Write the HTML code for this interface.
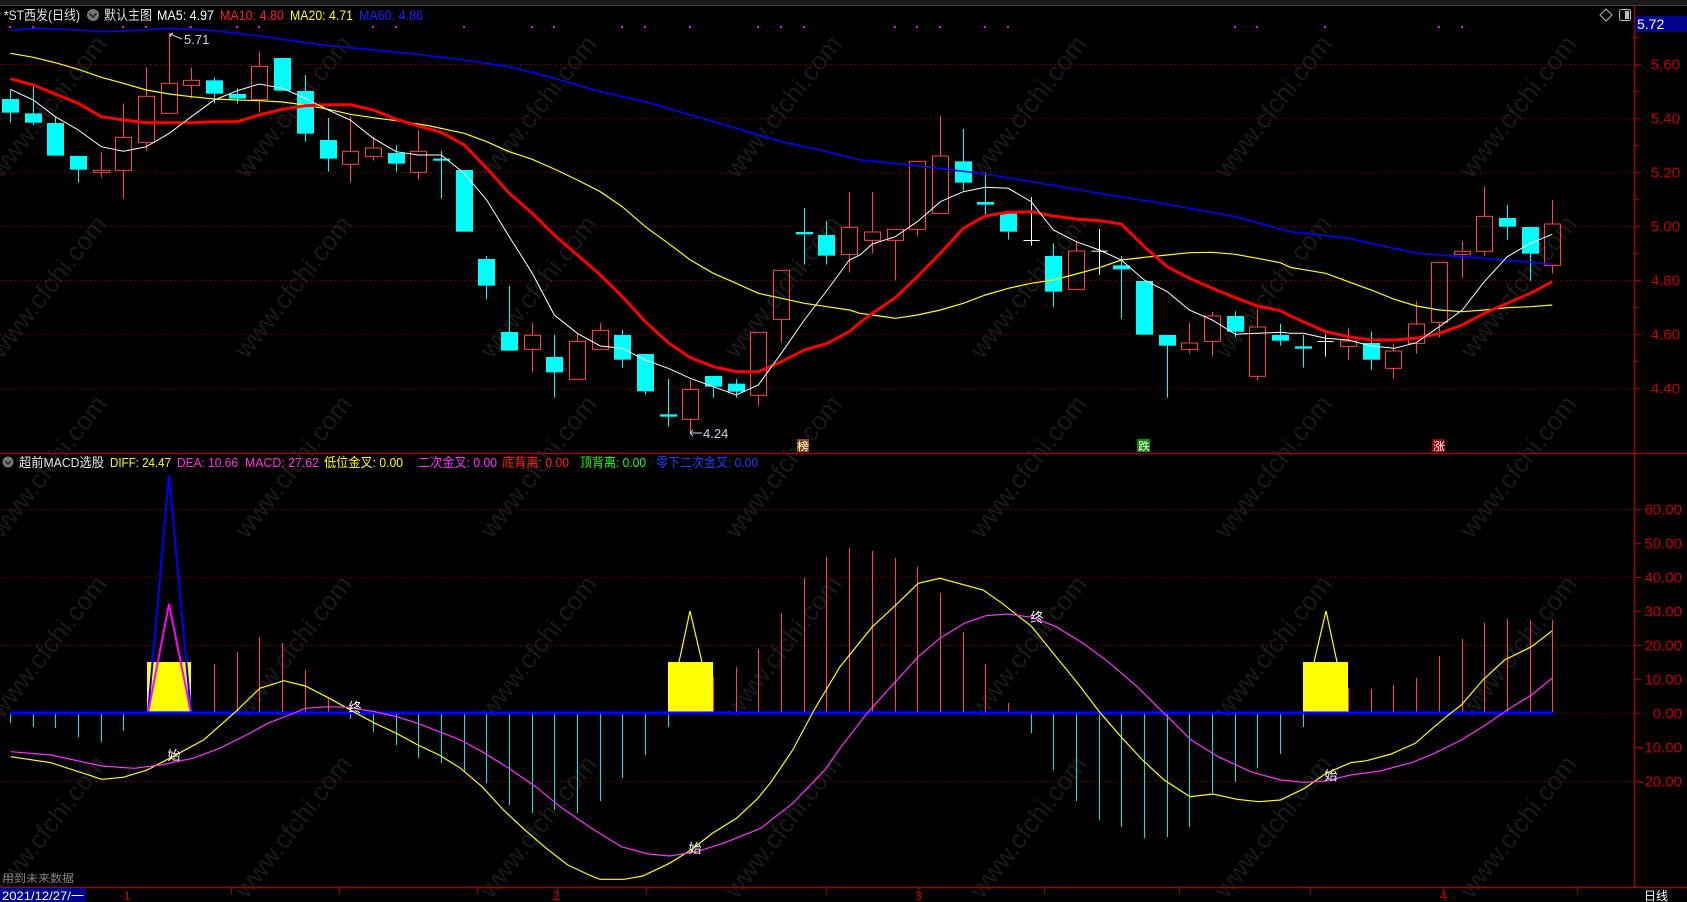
<!DOCTYPE html>
<html><head><meta charset="utf-8">
<style>
html,body{margin:0;padding:0;background:#000;overflow:hidden}
svg{display:block}
text{font-family:"Liberation Sans","Noto Sans CJK SC",sans-serif}
</style></head>
<body>
<svg id="s" xmlns="http://www.w3.org/2000/svg" width="1687" height="902" viewBox="0 0 1687 902">
<rect width="1687" height="902" fill="#000"/>
<rect x="0" y="0" width="1687" height="5" fill="#1a1a1a"/>
<line x1="0" y1="5.5" x2="1687" y2="5.5" stroke="#444" stroke-width="1"/>
<g id="wm"></g>
<g id="grid"></g>
<g id="cand"></g>
<g id="lines"></g>
<g id="macd"></g>
<line x1="1634.5" y1="6" x2="1634.5" y2="887" stroke="#a00000" stroke-width="1.5"/>
<line x1="0" y1="453.5" x2="1687" y2="453.5" stroke="#a00000" stroke-width="1.5"/>
<line x1="0" y1="887.5" x2="1687" y2="887.5" stroke="#a00000" stroke-width="1.5"/>
<g id="ticks"></g>
<g lengthAdjust="spacingAndGlyphs">
<text x="4" y="20" font-size="13.5" fill="#e0e0e0" textLength="76" lengthAdjust="spacingAndGlyphs">*ST西发(日线)</text>
<text x="104" y="20" font-size="13.5" fill="#e0e0e0" textLength="48" lengthAdjust="spacingAndGlyphs">默认主图</text>
<text x="157" y="20" font-size="13.5" fill="#ffffff" textLength="57" lengthAdjust="spacingAndGlyphs">MA5: 4.97</text>
<text x="220" y="20" font-size="13.5" fill="#ff2020" textLength="64" lengthAdjust="spacingAndGlyphs">MA10: 4.80</text>
<text x="290" y="20" font-size="13.5" fill="#ffff00" textLength="63" lengthAdjust="spacingAndGlyphs">MA20: 4.71</text>
<text x="359" y="20" font-size="13.5" fill="#2020ff" textLength="64" lengthAdjust="spacingAndGlyphs">MA60: 4.86</text>
</g>
<circle cx="93" cy="15" r="6" fill="#777"/>
<path d="M89.5 13.5 L93 17 L96.5 13.5" stroke="#222" stroke-width="1.6" fill="none"/>
<path d="M1606 9 L1612 15 L1606 21 L1600 15 Z" stroke="#bbb" stroke-width="1" fill="none"/>
<rect x="1619.5" y="9.5" width="11" height="11" rx="2" stroke="#bbb" fill="none"/>
<rect x="1625" y="11" width="4" height="8" fill="#bbb"/>
<rect x="1635" y="16" width="52" height="16" fill="#00008a"/>
<text x="1637" y="29" font-size="14" fill="#fff">5.72</text>
<path d="M170 34 L182 39 M170 34 L173 33 M170 34 L171 37" stroke="#c8d4e4" stroke-width="1" fill="none"/>
<text x="184" y="44" font-size="13" fill="#c8d4e4">5.71</text>
<path d="M690 433 L702 433 M690 433 L693 430 M690 433 L693 436" stroke="#c8d4e4" stroke-width="1" fill="none"/>
<text x="703" y="438" font-size="13" fill="#c8d4e4">4.24</text>
<rect x="797" y="439" width="12" height="13" fill="#8a4a0a"/><text x="797" y="450" font-size="11" fill="#fff" textLength="12" lengthAdjust="spacingAndGlyphs">榜</text>
<rect x="1137" y="439" width="13" height="13" fill="#0a8a0a"/><text x="1138" y="450" font-size="11" fill="#fff" textLength="12" lengthAdjust="spacingAndGlyphs">跌</text>
<rect x="1432" y="439" width="13" height="13" fill="#8a0000"/><text x="1433" y="450" font-size="11" fill="#fff" textLength="12" lengthAdjust="spacingAndGlyphs">涨</text>
<circle cx="8" cy="462" r="5.5" fill="#777"/>
<path d="M5 461 L8 464 L11 461" stroke="#222" stroke-width="1.4" fill="none"/>
<text x="19" y="467" font-size="13" fill="#e8e8e8" textLength="85" lengthAdjust="spacingAndGlyphs">超前MACD选股</text>
<text x="110" y="467" font-size="13" fill="#ffff00" textLength="61" lengthAdjust="spacingAndGlyphs">DIFF: 24.47</text>
<text x="177" y="467" font-size="13" fill="#ff33dd" textLength="61" lengthAdjust="spacingAndGlyphs">DEA: 10.66</text>
<text x="245" y="467" font-size="13" fill="#ff33dd" textLength="74" lengthAdjust="spacingAndGlyphs">MACD: 27.62</text>
<text x="324" y="467" font-size="13" fill="#ffff00" textLength="79" lengthAdjust="spacingAndGlyphs">低位金叉: 0.00</text>
<text x="418" y="467" font-size="13" fill="#ff33ff" textLength="79" lengthAdjust="spacingAndGlyphs">二次金叉: 0.00</text>
<text x="502" y="467" font-size="13" fill="#ff2020" textLength="67" lengthAdjust="spacingAndGlyphs">底背离: 0.00</text>
<text x="580" y="467" font-size="13" fill="#20ff20" textLength="66" lengthAdjust="spacingAndGlyphs">顶背离: 0.00</text>
<text x="656" y="467" font-size="13" fill="#2040ff" textLength="102" lengthAdjust="spacingAndGlyphs">零下二次金叉: 0.00</text>
<text x="2" y="882" font-size="11" fill="#888" textLength="72" lengthAdjust="spacingAndGlyphs">用到未来数据</text>
<rect x="0" y="888" width="86" height="14" fill="#00008a"/>
<text x="2" y="900" font-size="12" fill="#fff" textLength="82" lengthAdjust="spacingAndGlyphs">2021/12/27/一</text>
<text x="124" y="900" font-size="12" fill="#e00000">1</text>
<text x="553" y="900" font-size="12" fill="#e00000">2</text>
<text x="915" y="900" font-size="12" fill="#e00000">3</text>
<text x="1440" y="900" font-size="12" fill="#e00000">4</text>
<text x="1644" y="900" font-size="12" fill="#fff">日线</text>
<g id="dticks"></g>
</svg>
<script>
(function(){
var NS="http://www.w3.org/2000/svg";
function el(g,t,a){var e=document.createElementNS(NS,t);for(var k in a)e.setAttribute(k,a[k]);document.getElementById(g).appendChild(e);return e;}
for(var r=0;r<5;r++)for(var c=0;c<7;c++){
 var cx=55+245*c, cy=112+180*r;
 var t=el("wm","text",{x:cx,y:cy,"font-size":"26","fill":"#1a1a1a","text-anchor":"middle",transform:"rotate(-52 "+cx+" "+cy+")"});
 t.textContent="www.cfchi.com";
}
function py(p){return 64.3+(5.6-p)*270;}
[5.6,5.4,5.2,5.0,4.8,4.6,4.4].forEach(function(p){
 var y=Math.round(py(p))+0.5;
 el("grid","line",{x1:0,y1:y,x2:1634,y2:y,stroke:"#8a0000","stroke-dasharray":"1.5 3.5","stroke-width":1});
 var t=el("ticks","text",{x:1680,y:y+5,"font-size":"15","fill":"#c00000","text-anchor":"end"});t.textContent=p.toFixed(2);
 el("ticks","line",{x1:1634,y1:y,x2:1641,y2:y,stroke:"#a00000"});
 var y2=y+27;if(p>4.4)el("ticks","line",{x1:1634,y1:y2,x2:1639,y2:y2,stroke:"#a00000"});
});
el("ticks","line",{x1:1634,y1:37.5,x2:1639,y2:37.5,stroke:"#a00000"});
function my(v){return 713-v*3.395;}
[60,40,20,0,-20].forEach(function(v){var y=Math.round(my(v))+0.5;
 el("grid","line",{x1:0,y1:y,x2:1634,y2:y,stroke:"#8a0000","stroke-dasharray":"1.5 3.5","stroke-width":1});});
[60,50,40,30,20,10,0,-10,-20].forEach(function(v){var y=Math.round(my(v))+0.5;
 var t=el("ticks","text",{x:1682,y:y+5,"font-size":"15","fill":"#c00000","text-anchor":"end"});t.textContent=v.toFixed(2);
 el("ticks","line",{x1:1634,y1:y,x2:1641,y2:y,stroke:"#a00000"});});
[215,315,443,517,600,767,853,970,1095,1217,1341,1465].forEach(function(z){var x=Math.round(z/0.929)+0.5;
 el("dticks","line",{x1:x,y1:888,x2:x,y2:894,stroke:"#a00000"});});
var D=[["d",237,278,210,308],["d",280,308,200,316],["d",309,407,290,407],["d",408,449,408,488],["u",451,457,397,472],["u",352,451,250,536],["u",229,367,142,392],["u",190,280,40,280],["u",181,196,142,236],["d",181,221,172,250],["d",222,236,205,250],["u",139,239,94,278],["d",114,212,114,212],["d",213,341,165,365],["d",360,416,294,455],["u",394,433,289,488],["u",384,409,350,422],["d",399,431,376,455],["u",394,457,330,478],["d",416,421,393,536],["d",450,635,450,635],["d",717,797,708,838],["d",936,992,798,992],["u",946,988,909,1057],["d",1011,1057,945,1133],["u",964,1078,940,1078],["u",931,988,909,988],["d",945,1019,930,1043],["d",1002,1114,1002,1124],["d",1183,1190,1077,1220],["u",1108,1198,1080,1240],["d",1068,1100,1068,1133],["d",1091,1115,1077,1133],["u",937,1126,937,1157],["u",751,898,751,968],["d",636,643,564,734],["d",645,707,603,734],["u",622,703,516,758],["u",636,661,516,700],["u",628,661,628,782],["u",424,628,424,650],["u",408,580,288,580],["d",424,488,327,512],["d",546,554,457,585],["d",580,635,580,659],["w",660,662,531,677],["d",708,815,670,862],["u",693,808,663,808],["w",692,694,627,764],["d",736,748,708,896],["d",783,944,783,944],["d",945,977,945,1133],["u",969,988,909,1000],["u",888,964,875,1010],["d",888,935,874,952],["u",921,1069,867,1081],["d",945,962,911,977],["d",979,986,945,1043],["w",963,966,945,1010],["u",963,979,923,1019],["d",969,1019,935,1049],["u",993,1045,970,1076],["u",912,970,843,1001],["u",727,907,727,952],["u",694,703,663,773],["u",589,694,500,707],["d",594,620,555,659],["d",621,701,621,782],["u",612,736,540,760]];
function Y(z){return 20+z/3;}
D.forEach(function(c,i){
 var x=Math.round(10+22.68*i)+0.5, t=c[0], bt=Y(c[1]), bb=Y(c[2]), h=Y(c[3]), l=Y(c[4]);
 var col=t=="u"?"#ff4444":(t=="w"?"#ffffff":"#00ffff");
 if(t=="u"){
  if(h<bt)el("cand","line",{x1:x,y1:h,x2:x,y2:bt,stroke:col});
  if(l>bb)el("cand","line",{x1:x,y1:bb,x2:x,y2:l,stroke:col});
  el("cand","rect",{x:x-8,y:bt,width:16,height:Math.max(1,bb-bt),fill:"none",stroke:col,"stroke-width":1});
 }else{
  el("cand","line",{x1:x,y1:h,x2:x,y2:l,stroke:col});
  var hh=Math.max(2,bb-bt);
  if(t=="w")el("cand","rect",{x:x-8,y:bt,width:16,height:1,fill:col});
  else el("cand","rect",{x:x-8.5,y:bt,width:17,height:hh,fill:col});
 }
});
[10,33,123,146,191,237,259,373,396,464,532,554,622,645,690,758,781,804,895,917,940,985,1008,1235,1257,1325,1439,1462].forEach(function(x){
 el("cand","rect",{x:x-1,y:26,width:2,height:2,fill:"#ff00ff"});});
function seg(list){var out=[];list.forEach(function(s){var ox=s[0];for(var k=1;k<s.length;k+=2)out.push((ox+s[k]/3).toFixed(1)+","+Y(s[k+1]).toFixed(1));});return out.join(" ");}
var MA60=[[0,31,32,100,25,235,30,304,35,439,30,508,25,574,28,643,32,712,40,778,48,847,58,916,68,985,77,1051,83,1120,90,1189,97,1255,103],[430,0,108,103,120,238,140,373,175,511,215,646,245,781,285,919,325,1054,365,1192,395],[860,0,420,172,437,376,462,514,485,718,520,922,553,1126,590],[1290,0,635,175,655,379,700,583,715,787,733]];
var MA20=[[0,31,100,100,112,166,128,235,148,304,172,370,190,439,210,508,222,574,230,643,237,712,240,778,242,847,246,916,255,985,268,1051,283,1120,293,1189,302,1255,312],[430,0,318,103,340,170,365,238,395,307,418,373,447,442,480,511,515,577,560,646,620,715,670,781,720,850,760,919,790,985,820,1054,835,1123,850,1192,860,1258,870],[860,0,880,37,885,106,895,172,885,241,870,310,850,376,825,445,805,514,790,580,780,649,762,718,743,784,720,853,712,922,705,988,698,1057,697,1126,703,1192,715,1261,728],[1290,0,742,107,760,175,785,244,810,313,838,379,858,448,870,517,875,583,870,652,863,721,860,787,855]];
var MA10=[[0,31,176,100,195,166,222,235,250,304,290,370,300,439,308,508,308,574,308,643,305,712,305,778,285,847,268,916,257,985,254,1051,254,1120,270,1189,298,1255,318],[430,0,328,34,337,103,375,170,445,238,520,307,580,373,645,442,705,511,765,577,830,646,905,715,968,781,1013,850,1040,919,1055,985,1055,1054,1025,1123,990,1192,970,1258,935],[860,0,908,37,880,106,833,172,770,241,700,310,625,376,588,445,577,514,575,580,588,649,597,718,602,784,612,853,680,922,740,988,775,1057,805,1126,833,1192,858,1261,872],[1290,0,887,107,935,175,950,244,960,313,960,379,955,448,940,517,915,583,880,652,850,721,820,787,785]];
var MA5=[[0,31,208,100,240,166,290,235,330,304,380,370,394,439,380,508,340,574,290,643,240,712,212,778,192,847,205,916,235,985,270,1051,300,1120,355,1189,395,1255,405],[430,0,405,34,405,103,460,170,540,238,650,307,760,373,885,442,940,511,978,577,985,646,1020,715,1045,781,1075,850,1100,919,1125,985,1095,1054,1000,1123,900,1192,810,1258,720],[860,0,705,37,672,106,650,172,605,241,545,310,515,376,502,445,505,514,545,580,630,649,665,718,690,784,720,853,780,922,815,988,870,1057,900,1126,943,1192,940,1261,937],[1290,0,940,40,940,107,955,175,960,244,978,313,985,379,968,448,920,517,870,583,785,652,710,721,670,787,643]];
el("lines","polyline",{points:seg(MA60),fill:"none",stroke:"#0000ff","stroke-width":1.6});
el("lines","polyline",{points:seg(MA20),fill:"none",stroke:"#ffff00","stroke-width":1.2});
el("lines","polyline",{points:seg(MA10),fill:"none",stroke:"#ff0000","stroke-width":3});
el("lines","polyline",{points:seg(MA5),fill:"none",stroke:"#ffffff","stroke-width":1});
var H={0:723,1:727,2:728,3:737,4:742,5:731,9:664,10:652,11:637,12:643,13:670,14:699,15:719,16:732,17:745,18:758,19:763,20:772,21:783,22:805,23:813,24:810,25:813,26:801,27:778,28:755,29:727,31:677,32:667,33:649,34:613,35:578,36:557,37:548,38:551,39:558,40:567,41:593,42:632,43:664,44:703,45:733,46:770,47:801,48:820,49:827,50:838,51:837,52:827,53:793,54:782,55:768,56:754,57:727,59:688,60:689,61:685,62:678,63:656,64:639,65:623,66:619,67:620,68:620};
for(var k in H){var i=+k,x=Math.round(10+22.68*i)+0.5,y=H[k];
 el("macd","line",{x1:x,y1:713,x2:x,y2:y,stroke:(y<713?"#ff4444":"#00e5ee"),"stroke-width":1});}
el("macd","rect",{x:147,y:662,width:44,height:51,fill:"#ffff00"});
el("macd","rect",{x:668,y:662,width:45,height:50,fill:"#ffff00"});
el("macd","rect",{x:1303,y:662,width:45,height:50,fill:"#ffff00"});
el("macd","polyline",{points:"148,713 169,475 191,713",fill:"none",stroke:"#0000ff","stroke-width":2});
el("macd","polyline",{points:"148,713 169,604 191,713",fill:"none",stroke:"#ff00ff","stroke-width":2});
el("macd","line",{x1:147,y1:712,x2:191,y2:712,stroke:"#00cc00","stroke-width":1.5});
el("macd","polyline",{points:"679,662 690,611 702,662",fill:"none",stroke:"#ffff00","stroke-width":1.2});
el("macd","polyline",{points:"1314,662 1326,611 1337,662",fill:"none",stroke:"#ffff00","stroke-width":1.2});
el("macd","line",{x1:10,y1:713,x2:1553,y2:713,stroke:"#0000ff","stroke-width":3});
function mseg(a,ox,sx){var o=[];for(var k=0;k<a.length;k+=2)o.push((ox+a[k]/sx).toFixed(1)+","+(450+a[k+1]/3).toFixed(1));return o;}
var dif=mseg([20,920,95,938,190,988,230,982,275,960,320,922,380,870,440,785,485,715,530,692,570,708,615,745,660,785,700,820,740,850,780,885,820,915,860,955,900,1010,940,1080,980,1140,1020,1195,1060,1245,1100,1275,1120,1288,1165,1288,1200,1278,1250,1240,1290,1200,1330,1150,1375,1105,1415,1045,1440,995,1480,900,1520,780],0,1.867).concat(mseg([0,650,60,530,100,470,145,400,185,385,265,420,300,460,355,530,400,620,440,700,480,785,520,860,560,930,600,990,648,1040,690,1032,735,1048,775,1055,815,1050,860,1015,900,970,945,938,975,932,1020,912,1065,880,1100,830,1130,790,1150,765,1190,690,1230,630,1280,590,1318,543],840,1.851));
var dea=mseg([20,905,95,915,190,948,250,955,300,945,360,925,410,895,460,855,500,820,540,795,570,775,615,770,650,772,700,785,740,800,780,820,820,845,860,870,900,905,950,955,1000,1010,1050,1075,1100,1130,1160,1190,1210,1212,1250,1218,1300,1205,1350,1180,1420,1135,1480,1060,1540,960],0,1.867).concat(mseg([0,895,50,790,100,700,145,620,185,565,230,520,270,497,310,492,355,502,400,530,450,580,500,640,550,710,600,790,650,870,700,920,760,965,815,990,860,997,900,993,945,975,1000,963,1060,937,1100,910,1150,870,1200,820,1235,780,1280,735,1318,685],840,1.851));
el("macd","polyline",{points:dif.join(" "),fill:"none",stroke:"#ffff00","stroke-width":1.2});
el("macd","polyline",{points:dea.join(" "),fill:"none",stroke:"#ff33ff","stroke-width":1.2});
[["始",174,760],["终",355,712],["始",695,853],["终",1037,622],["始",1331,780]].forEach(function(a){
 var t=el("macd","text",{x:a[1],y:a[2],"font-size":"13","fill":"#fff","text-anchor":"middle"});t.textContent=a[0];});
})();
</script>
</body></html>
